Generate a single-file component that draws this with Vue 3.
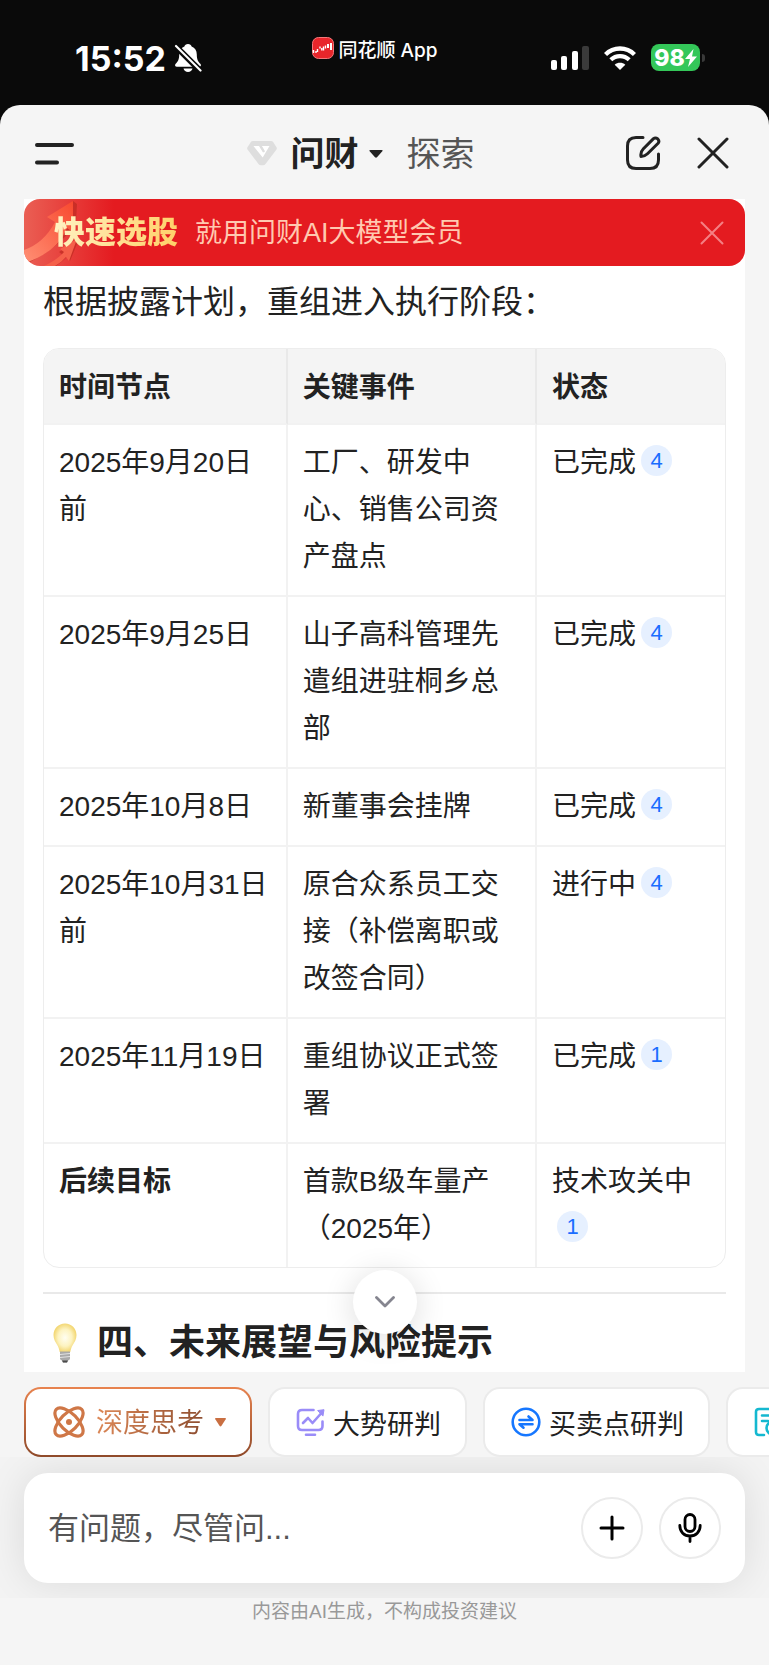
<template>
  <div class="screen">
    <header class="status-bar">
      <div class="status-time">
        <span>15:52</span>
        <svg width="28" height="30" viewBox="0 0 28 30" aria-hidden="true">
          <path d="M14 1c-2 0-3.200 1.200-3.600 2.500C7 4.800 5.200 7.500 5.200 11.500c0 5-1.300 7-3.500 9.200-1.300 1.400-.6 3 1.200 3h22.200c1.800 0 2.500-1.600 1.200-3-2.200-2.200-3.500-4.200-3.500-9.200 0-4-1.800-6.700-5.200-8C17.200 2.200 16 1 14 1z" fill="#fff" />
          <path d="M9.500 25.500h9c-.6 2.200-2.300 3.500-4.500 3.500s-3.900-1.300-4.500-3.500z" fill="#fff" />
          <path d="M1 2.500L28 29.500" stroke="#0a0a0a" stroke-width="6" />
          <path d="M2 3L26.500 27.500" stroke="#fff" stroke-width="2.200" stroke-linecap="round" />
        </svg>
      </div>
      <div class="status-app">
        <svg width="22" height="22" viewBox="0 0 22 22" aria-hidden="true">
          <rect x=".5" y=".5" width="21" height="21" rx="6" fill="#e8262b" stroke="#f4787b" />
          <path d="M1.500 13v3M4 14v2M5.500 12v3M8 9.500v2M9.800 11v2.500M11.500 9.500v4M13.500 8.500v3" stroke="#fff" stroke-width="1.400" />
          <path d="M16 7v4M19 6v7" stroke="#fff" stroke-width="2" />
        </svg>
        <span>同花顺 App</span>
      </div>
      <div class="status-icons">
        <svg width="38" height="24" viewBox="0 0 38 24" aria-hidden="true">
          <rect x="0" y="14" width="6" height="10" rx="2" fill="#fff" />
          <rect x="10" y="10" width="6" height="14" rx="2" fill="#fff" />
          <rect x="21" y="5" width="6" height="19" rx="2" fill="#fff" />
          <rect x="31" y="0" width="7" height="24" rx="2" fill="#3a3a3a" />
        </svg>
        <svg width="32" height="24" viewBox="0 0 32 24" aria-hidden="true">
          <path d="M1.500 8.500C9.500 .5 22.500 .5 30.500 8.500" fill="none" stroke="#fff" stroke-width="4.400" />
          <path d="M6.800 13.800c5.200-5 13.200-5 18.400 0" fill="none" stroke="#fff" stroke-width="4.200" />
          <path d="M16 24l-5.300-5.200c3-2.600 7.600-2.600 10.600 0z" fill="#fff" />
        </svg>
        <div class="battery">
          <span class="battery-body">98<svg width="12" height="18" viewBox="0 0 12 18" aria-hidden="true"><path d="M8.500 0L0 10h5L3 18l9-10.500H7z" fill="#fff" /></svg></span>
          <span class="battery-nub"></span>
        </div>
      </div>
    </header>

    <main class="sheet">
      <nav class="nav-bar">
        <button class="icon-btn" aria-label="菜单">
          <svg width="40" height="24" viewBox="0 0 40 24">
            <path d="M3 4h35M3 21.500h20" stroke="#222" stroke-width="4" stroke-linecap="round" />
          </svg>
        </button>
        <div class="nav-tabs">
          <svg width="30" height="26" viewBox="0 0 30 26" aria-hidden="true">
            <path d="M6 1h18q1.500 0 2.300 1.200l3.200 5q.8 1.300-.2 2.600L18.500 24q-1 1.300-2.300 1.300h-2.400q-1.300 0-2.300-1.300L.7 9.800q-1-1.300-.2-2.600l3.200-5Q4.500 1 6 1z" fill="#dedede" />
            <path d="M6.500 6h5.500l4 6.500 1.500-2-2.600-4.500h7.600l-6.800 11.500z" fill="#fff" />
            <path d="M13.500 6l3.800 6" stroke="#dedede" stroke-width="1.500" />
          </svg>
          <button class="tab tab-active">问财
            <svg width="14" height="8" viewBox="0 0 14 8"><path d="M1.500 0h11q2 0 .6 1.500L8 7.300q-1 .9-2 0L.9 1.500Q-.5 0 1.500 0z" fill="#222" /></svg>
          </button>
          <button class="tab">探索</button>
        </div>
        <div class="nav-actions">
          <button class="icon-btn" aria-label="新建对话">
            <svg width="36" height="36" viewBox="0 0 36 36" fill="none" stroke="#222" stroke-width="3" stroke-linecap="round" stroke-linejoin="round">
              <path d="M18 2.500h-7Q2.500 2.500 2.500 11v14q0 8.500 8.500 8.500h14q8.500 0 8.500-8.500v-6" />
              <path d="M16 21.500q-.8-4.500 2.400-7.800L28.500 3.600q2-1.500 4.300.3 2 2.300.3 4.400L22.500 18.800q-2.800 2.700-6.500 2.700z" />
            </svg>
          </button>
          <button class="icon-btn" aria-label="关闭">
            <svg width="32" height="32" viewBox="0 0 32 32"><path d="M2 2l28 28M30 2L2 30" stroke="#222" stroke-width="3" stroke-linecap="round" /></svg>
          </button>
        </div>
      </nav>

      <article class="answer">
        <aside class="banner">
          <svg class="banner-arrow" width="80" height="67" viewBox="0 0 80 67" aria-hidden="true">
            <defs>
              <linearGradient id="arrowFill" x1="0" y1="1" x2="1" y2="0">
                <stop offset="0" stop-color="#ff8f74" />
                <stop offset="1" stop-color="#f8492f" />
              </linearGradient>
            </defs>
            <path d="M49 2l4 3-2 36-5-9Q34 48 6 63L2 58Q22 48 34 26z" fill="#b8281c" opacity=".6" />
            <path d="M49 2L23 18l8 5Q20 44 0 51v7q2 3 4 5Q34 52 43 29l6 4z" fill="url(#arrowFill)" />
            <path d="M55 40l-9 22-3-4q-5 5-11 9h-5q8-5 12-11l-4-3z" fill="#b8281c" opacity=".6" />
            <path d="M53 40l-17 10 4 3q-7 8-20 14h11q7-4 11-9l3 4z" fill="#f5604a" />
          </svg>
          <strong class="banner-title">快速选股</strong>
          <span class="banner-text">就用问财AI大模型会员</span>
          <button class="icon-btn" aria-label="关闭横幅">
            <svg width="24" height="24" viewBox="0 0 24 24"><path d="M1.500 1.500l21 21M22.500 1.500l-21 21" stroke="#f58084" stroke-width="2" stroke-linecap="round" /></svg>
          </button>
        </aside>

        <div class="answer-body">
          <p class="intro">根据披露计划，重组进入执行阶段：</p>
          <table class="plan">
            <thead>
              <tr><th>时间节点</th><th>关键事件</th><th>状态</th></tr>
            </thead>
            <tbody>
              <tr v-for="row in rows" :key="row.time">
                <td><strong v-if="row.bold">{{ row.time }}</strong><template v-else>{{ row.time }}</template></td>
                <td>{{ row.event }}</td>
                <td>{{ row.status }}<a href="#" class="cite">{{ row.cite }}</a></td>
              </tr>
            </tbody>
          </table>
          <hr class="divider">
          <h2 class="section-title">
            <svg width="24" height="40" viewBox="0 0 24 40" aria-hidden="true">
              <defs>
                <radialGradient id="bulbFill" cx=".5" cy=".5" r=".5">
                  <stop offset="0" stop-color="#fffef2" />
                  <stop offset=".6" stop-color="#fdf3c0" />
                  <stop offset="1" stop-color="#f3d774" />
                </radialGradient>
              </defs>
              <path d="M12 .5C5.500 .5 .5 5.500 .5 12c0 4.500 2 7 4 10.500 1.200 2.200 1.800 4 2.200 6.500h10.600c.4-2.500 1-4.300 2.200-6.500 2-3.500 4-6 4-10.500C23.500 5.500 18.500 .5 12 .5z" fill="url(#bulbFill)" />
              <path d="M7 28.500h10v7q0 1.500-2 2l-1 2h-4l-1-2q-2-.5-2-2z" fill="#a9a9a9" />
              <path d="M7 31.500l10-1M7 34.500l10-1" stroke="#e3e3e3" stroke-width="1" />
              <path d="M9 37.500h6l-1 2h-4z" fill="#4b4b4b" />
            </svg>
            <span>四、未来展望与风险提示</span>
          </h2>
          <button class="scroll-down" aria-label="滚动到底部">
            <svg width="20" height="12" viewBox="0 0 20 12"><path d="M1.500 1.500L10 10l8.500-8.500" fill="none" stroke="#85858f" stroke-width="2.800" stroke-linecap="round" stroke-linejoin="round" /></svg>
          </button>
        </div>
      </article>

      <div class="chips">
        <button class="chip chip-think">
          <svg width="32" height="32" viewBox="0 0 32 32" fill="none" stroke="#cf7747" stroke-width="3.200">
            <ellipse cx="16" cy="16" rx="18" ry="8.500" transform="rotate(45 16 16)" />
            <ellipse cx="16" cy="16" rx="18" ry="8.500" transform="rotate(-45 16 16)" />
            <circle cx="16" cy="16" r="3" fill="#cf7747" stroke="none" />
          </svg>
          <span class="think-label">深度思考</span>
          <svg width="11" height="9" viewBox="0 0 11 9"><path d="M1 0h9q1.500 0 .7 1.300L6.500 7.800q-1 1.200-2 0L.3 1.300Q-.5 0 1 0z" fill="#c96f42" /></svg>
        </button>
        <button class="chip">
          <svg width="29" height="28" viewBox="0 0 29 28" fill="none" stroke="#9a8cf8" stroke-width="2.600" stroke-linecap="round" stroke-linejoin="round">
            <path d="M17.500 2H6Q2 2 2 6v12q0 4 4 4h16.500q4 0 4-4v-4.500M10 26.700h9" />
            <path d="M7 15l5-5 4.500 5L25 5.500" />
            <path d="M22 2.500l6-.8-1 6z" fill="#9a8cf8" stroke-width="1" />
          </svg>
          <span>大势研判</span>
        </button>
        <button class="chip">
          <svg width="30" height="30" viewBox="0 0 30 30" fill="none" stroke="#1677ff" stroke-width="2.600" stroke-linecap="round" stroke-linejoin="round">
            <circle cx="15" cy="15" r="13.300" />
            <path d="M8.500 13h13l-4-3.500M21.500 17.200h-13l4 3.500" />
          </svg>
          <span>买卖点研判</span>
        </button>
        <button class="chip chip-next" aria-label="更多">
          <svg width="30" height="30" viewBox="0 0 30 30" fill="none" stroke="#14b8d0" stroke-width="2.600" stroke-linecap="round" stroke-linejoin="round">
            <path d="M10 28H5q-3 0-3-3V5q0-3 3-3h17q3 0 3 3v6M8 8.500h11M8 14h6" />
            <circle cx="19" cy="21" r="6.500" />
            <path d="M24 26l3 3" />
          </svg>
        </button>
      </div>

      <div class="composer-wrap">
        <form class="composer" @submit.prevent>
          <input v-model="question" type="text" placeholder="有问题，尽管问..." aria-label="输入问题">
          <button type="button" class="round-btn" aria-label="添加">
            <svg width="26" height="26" viewBox="0 0 26 26"><path d="M13 2v22M2 13h22" stroke="#000" stroke-width="3" stroke-linecap="round" /></svg>
          </button>
          <button type="button" class="round-btn" aria-label="语音输入">
            <svg width="24" height="30" viewBox="0 0 24 30" fill="none" stroke="#000" stroke-width="2.800" stroke-linecap="round">
              <rect x="7" y="1.500" width="10" height="17" rx="5" />
              <path d="M1.800 12.500c0 6.500 4.500 10.500 10.200 10.500s10.200-4 10.200-10.500M12 23.500v5" />
            </svg>
          </button>
        </form>
      </div>
      <footer class="disclaimer">内容由AI生成，不构成投资建议</footer>
    </main>
  </div>
</template>

<script setup>
import { ref } from 'vue';

const question = ref('');

const rows = [
  { time: '2025年9月20日前', event: '工厂、研发中心、销售公司资产盘点', status: '已完成', cite: 4 },
  { time: '2025年9月25日', event: '山子高科管理先遣组进驻桐乡总部', status: '已完成', cite: 4 },
  { time: '2025年10月8日', event: '新董事会挂牌', status: '已完成', cite: 4 },
  { time: '2025年10月31日前', event: '原合众系员工交接（补偿离职或改签合同）', status: '进行中', cite: 4 },
  { time: '2025年11月19日', event: '重组协议正式签署', status: '已完成', cite: 1 },
  { time: '后续目标', event: '首款B级车量产（2025年）', status: '技术攻关中', cite: 1, bold: true },
];
</script>

<style>
body { margin: 0; background: #f5f5f5; }
</style>

<style scoped>
.screen { min-height: 100vh; background: #0a0a0a; color: #222; font-family: "Liberation Sans", "Noto Sans CJK SC", sans-serif; overflow: hidden; }
.screen * { box-sizing: border-box; }
svg { display: block; flex: none; }
button { border: 0; padding: 0; background: none; font: inherit; color: inherit; }
.icon-btn { display: flex; }

/* 状态栏 */
.status-bar { height: 105px; display: grid; grid-template-columns: 1fr auto 1fr; padding: 0 64px 0 45px; color: #fff; font-family: Inter, "Noto Sans CJK SC", sans-serif; }
.status-time { display: flex; align-items: center; gap: 8px; height: 116px; padding-left: 30px; font-size: 34px; font-weight: 700; }
.status-app { display: flex; align-items: center; gap: 4px; height: 96px; font-size: 19px; font-weight: 500; }
.status-icons { display: flex; align-items: center; justify-content: flex-end; gap: 15px; height: 115px; }
.battery { display: flex; align-items: center; gap: 2px; }
.battery-body { display: flex; align-items: center; justify-content: center; width: 49px; height: 27px; border-radius: 8px; background: #34c759; font-size: 23px; font-weight: 800; }
.battery-nub { width: 3px; height: 8px; border-radius: 0 3px 3px 0; background: #3a3a3a; }

.sheet { background: #f5f5f5; border-radius: 20px 20px 0 0; min-height: calc(100vh - 105px); }
.nav-bar { height: 94px; display: grid; grid-template-columns: 1fr auto 1fr; align-items: center; padding: 2px 40px 0 34px; }
.nav-tabs { display: flex; align-items: center; gap: 14px; margin-right: 42px; }
.tab { display: flex; align-items: center; gap: 10px; padding-top: 2px; font-size: 34px; line-height: 48px; color: #555; }
.tab-active { font-weight: 700; color: #222; margin-right: 10px; }
.nav-actions { display: flex; align-items: center; justify-content: flex-end; gap: 36px; }

.answer { margin: 0 24px; background: #fff; }
.banner { position: relative; display: flex; align-items: center; height: 67px; padding: 0 21px 0 30px; border-radius: 16px; overflow: hidden; background: linear-gradient(90deg, #ea5f54 0, #e41b20 90px); }
.banner-arrow { position: absolute; left: 0; top: 0; }
.banner-title { position: relative; font-size: 31px; font-weight: 900; line-height: 44px; background: linear-gradient(100deg, #fff3c4, #ffcf66); background-clip: text; color: transparent; }
.banner-text { flex: 1; margin-left: 17px; font-size: 27px; line-height: 40px; color: #ffc9b0; }

.answer-body { position: relative; padding: 0 19px 4px; }
.intro { margin: 0; padding: 12px 0 22px; font-size: 32px; line-height: 48px; }
.plan { width: 100%; table-layout: fixed; border-collapse: separate; border-spacing: 0; border: 1px solid #ededed; border-radius: 16px; overflow: hidden; font-size: 28px; line-height: 47px; }
.plan th, .plan td { padding: 14px 15px 15px; text-align: left; vertical-align: top; border-right: 2px solid #f2f2f2; border-bottom: 2px solid #f2f2f2; }
.plan th { padding: 16px 15px 12px; background: #f4f4f4; font-weight: 700; line-height: 46px; border-right-color: #e9e9e9; }
.plan th:nth-child(1) { width: 35.8%; }
.plan th:nth-child(2) { width: 36.6%; }
.plan th:last-child, .plan td:last-child { border-right: 0; }
.plan tbody tr:last-child td { border-bottom: 0; }
.cite { display: inline-flex; align-items: center; justify-content: center; width: 31px; height: 31px; margin-left: 5px; border-radius: 50%; background: #e6f0ff; color: #1a6dff; font-size: 22px; line-height: 31px; text-decoration: none; vertical-align: 4px; }
.divider { margin: 24px 0 0; border: 0; height: 2px; background: #e9e9e9; }
.section-title { display: flex; align-items: center; gap: 20px; margin: 0; padding: 24px 0 0 10px; font-size: 36px; font-weight: 700; line-height: 50px; }
.scroll-down { position: absolute; left: 50%; bottom: 38px; width: 64px; height: 64px; margin-left: -32px; display: flex; align-items: center; justify-content: center; border-radius: 50%; background: #fff; box-shadow: 0 4px 32px rgba(0, 0, 0, 0.14); }

.chips { display: flex; gap: 16px; padding: 15px 0 0 24px; overflow: hidden; }
.chip { flex: none; display: flex; align-items: center; gap: 8px; height: 70px; padding: 0 24px 0 26px; border: 2px solid #ebebeb; border-radius: 17px; background: #fff; font-size: 27px; }
.chip-think { gap: 11px; padding: 0 24px 0 27px; border-color: transparent; background: linear-gradient(#fff, #fff) padding-box, linear-gradient(#e8834f, #8f4a2a) border-box; }
.chip-next { padding-right: 120px; }
.think-label { padding-bottom: 4px; background: linear-gradient(100deg, #e08a58, #8a4b2e); background-clip: text; color: transparent; }

.composer-wrap { padding: 16px 24px 15px; overflow: hidden; background: #f3f3f3; }
.composer { display: flex; align-items: center; gap: 16px; height: 110px; padding: 0 24px; border-radius: 24px; background: #fff; box-shadow: 0 0 40px rgba(0, 0, 0, 0.1); }
.composer input { flex: 1; min-width: 0; border: 0; padding: 2px 0 0; outline: 0; background: none; font: inherit; font-size: 31px; color: #222; }
.composer input::placeholder { color: #555; opacity: 1; }
.round-btn { flex: none; display: flex; align-items: center; justify-content: center; width: 62px; height: 62px; border: 2px solid #ebebeb; border-radius: 50%; }
.disclaimer { padding-bottom: 38px; text-align: center; font-size: 19px; line-height: 28px; color: #999; }
</style>
